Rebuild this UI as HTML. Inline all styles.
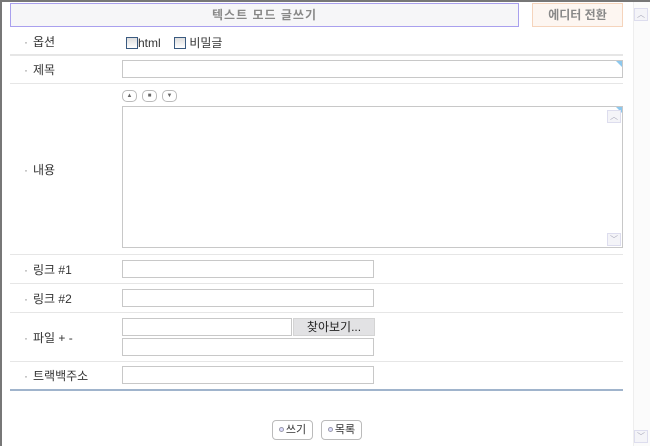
<!DOCTYPE html>
<html><head><meta charset="utf-8"><style>
*{margin:0;padding:0;box-sizing:border-box}
body{width:650px;height:446px;background:#fff;font-family:"Liberation Sans","Noto Sans CJK KR",sans-serif;font-size:12px;color:#333;position:relative;overflow:hidden}
.frame{position:absolute;left:0;top:0;width:650px;height:446px;border-left:2px solid #777;border-top:2px solid #777}
.abs{position:absolute}
.sep{position:absolute;left:10px;width:613px;height:1px;background:#e6e6e6}
.lbl{position:absolute;left:24px;font-size:12px;color:#333}
.lbl:before{content:"·";color:#888;margin-right:5px}
.inp{position:absolute;border:1px solid #c8c8c8;background:#fff}
.btn{position:absolute;border:1px solid #bbb;border-radius:4px;background:#fff;font-size:11px;height:20px;line-height:18px;text-align:center}
.btn i{display:inline-block;width:5px;height:5px;border:1px solid #99a;border-radius:50%;background:#ddf;margin-right:2px;vertical-align:1px}
.cb{display:inline-block;width:12px;height:12px;border:1px solid #3a5a80;background:linear-gradient(#ddd,#fff);vertical-align:-2px}
.sb{position:absolute;width:14px;height:13px;border:1px solid #dde;background:#f4f4f8;font-size:8px;color:#aab;text-align:center;line-height:11px}
.tri{position:absolute;right:0;top:0;width:0;height:0;border-top:6px solid #8cc8ee;border-left:6px solid transparent}
</style></head><body>
<div class="frame"></div>
<div class="abs" style="left:633px;top:2px;width:17px;height:444px;background:#fbfbfb;border-left:1px solid #eee"></div>
<div class="sb" style="left:634px;top:8px">︿</div>
<div class="sb" style="left:634px;top:430px">﹀</div>

<div class="abs" style="left:10px;top:3px;width:509px;height:24px;border:1px solid #a9a0ee;background:#f6f6f8;text-align:center;line-height:22px;color:#888;font-weight:bold;font-size:12px;letter-spacing:1px">텍스트 모드 글쓰기</div>
<div class="abs" style="left:532px;top:3px;width:91px;height:24px;border:1px solid #f5d4bc;background:#fdf6f1;text-align:center;line-height:22px;color:#888;font-weight:bold;font-size:12px">에디터 전환</div>

<div class="lbl" style="top:33px">옵션</div>
<div class="abs" style="left:126px;top:34px;font-size:12px"><span class="cb"></span>html&nbsp;&nbsp;&nbsp;&nbsp;<span class="cb"></span> 비밀글</div>
<div class="sep" style="top:54px;height:2px"></div>

<div class="lbl" style="top:61px">제목</div>
<div class="inp" style="left:122px;top:60px;width:501px;height:18px"><div class="tri"></div></div>
<div class="sep" style="top:83px"></div>

<div class="btn" style="left:122px;top:90px;width:15px;height:12px;border-radius:5px;font-size:6px;line-height:10px;color:#666">▲</div>
<div class="btn" style="left:142px;top:90px;width:15px;height:12px;border-radius:5px;font-size:6px;line-height:10px;color:#666">■</div>
<div class="btn" style="left:162px;top:90px;width:15px;height:12px;border-radius:5px;font-size:6px;line-height:10px;color:#666">▼</div>
<div class="lbl" style="top:161px">내용</div>
<div class="inp" style="left:122px;top:106px;width:501px;height:142px"><div class="tri"></div>
<div class="sb" style="right:1px;top:3px;left:auto">︿</div><div class="sb" style="right:1px;bottom:1px;left:auto;top:auto">﹀</div></div>
<div class="sep" style="top:254px"></div>

<div class="lbl" style="top:261px">링크 #1</div>
<div class="inp" style="left:122px;top:260px;width:252px;height:18px"></div>
<div class="sep" style="top:283px"></div>
<div class="lbl" style="top:290px">링크 #2</div>
<div class="inp" style="left:122px;top:289px;width:252px;height:18px"></div>
<div class="sep" style="top:312px"></div>

<div class="lbl" style="top:329px">파일 + -</div>
<div class="inp" style="left:122px;top:318px;width:170px;height:18px"></div>
<div class="abs" style="left:293px;top:318px;width:82px;height:18px;background:#e2e2e4;border:1px solid #d4d4d4;text-align:center;line-height:16px;font-size:12px;color:#222">찾아보기...</div>
<div class="inp" style="left:122px;top:338px;width:252px;height:18px"></div>
<div class="sep" style="top:361px"></div>

<div class="lbl" style="top:367px">트랙백주소</div>
<div class="inp" style="left:122px;top:366px;width:252px;height:18px"></div>
<div class="abs" style="left:10px;top:389px;width:613px;height:2px;background:#a0b4cc"></div>

<div class="btn" style="left:272px;top:420px;width:41px"><i></i>쓰기</div>
<div class="btn" style="left:321px;top:420px;width:41px"><i></i>목록</div>
</body></html>
